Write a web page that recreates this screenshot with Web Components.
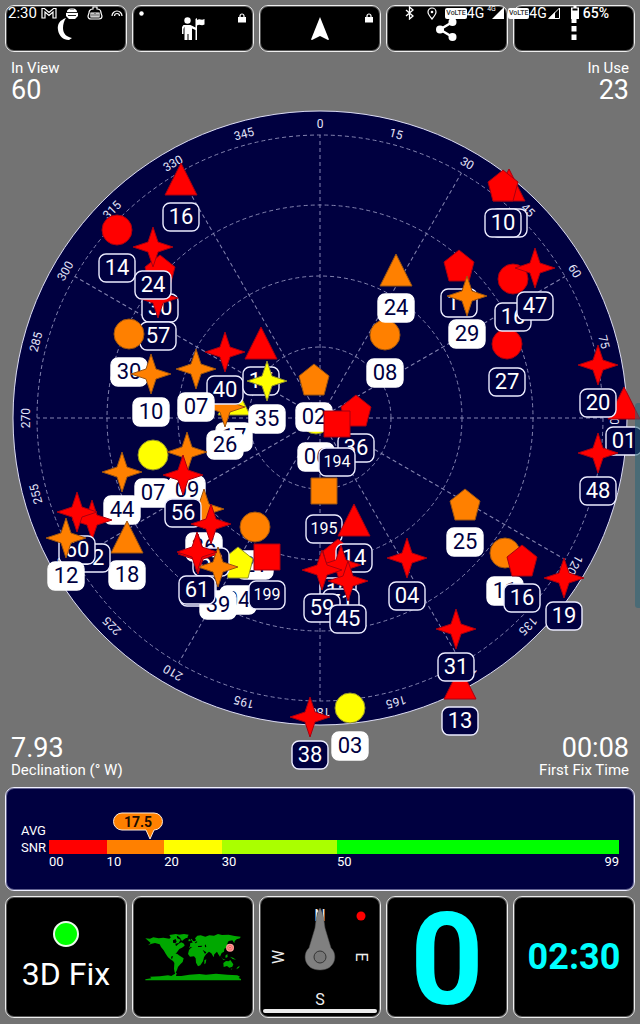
<!DOCTYPE html>
<html lang="en">
<head>
<meta charset="utf-8">
<meta name="viewport" content="width=device-width, initial-scale=1">
<title>GPS satellites</title>
<style>
html, body { margin: 0; background: #737373; }
body { font-family: Roboto, "Liberation Sans", sans-serif; color: #fff; overflow-x: hidden; }
</style>
</head>
<body>
<gps-app></gps-app>

<template id="t-app">
<style>
:host { display: block; position: relative; }
.row { display: grid; grid-template-columns: repeat(5, minmax(0, 1fr)); gap: 5px; padding: 5px 5px 0; }
.stats { display: flex; justify-content: space-between; padding: 7px 11px 5px; }
.stats.low { padding: 7px 11px 8px; }
.tiles { padding-bottom: 5px; }
svg { display: block; fill: #fff; }
status-bar, edge-handle { position: absolute; }
status-bar { top: 5px; left: 0; right: 0; }
edge-handle { top: 403px; right: 0; }
</style>
<div class="row">
  <tool-button label="Night mode"><svg width="24" height="24" viewBox="0 0 24 24"><path d="M12 1C6 3 3 7 4 13c1 6 5 10 11 10l3-2C13 20 9 17 9 11 9 7 10 4 12 1z"/></svg></tool-button>
  <tool-button label="Waypoints" locked><svg width="24" height="24" viewBox="0 0 24 24"><circle cx="6.500" cy="3.500" r="3.200"/><path d="M2.500 8h7l5 2.500V2l1.500-1v2c3-2 4 1 7.500-1v5.500c-3.500 2-4.500-1-7.500 1V23h-1.500V13l-3.500-1.500V23H7.500v-6h-1v6H3.500V9.500L2.500 12v5H1V10z"/></svg></tool-button>
  <tool-button label="Navigate" locked><svg width="24" height="24" viewBox="0 0 24 24"><path d="M12 0l9 22.500-1 .5-8-4-8 4-1-.5z"/></svg></tool-button>
  <tool-button label="Share"><svg width="24" height="24" viewBox="0 0 24 24"><path d="M17.500 5L5 12.500l12.500 7.500" fill="none" stroke="#fff" stroke-width="2.500"/><circle cx="17.500" cy="5" r="4"/><circle cx="5" cy="12.500" r="4"/><circle cx="17.500" cy="20" r="4"/></svg></tool-button>
  <tool-button label="More"><svg width="24" height="24" viewBox="0 0 24 24"><path d="M9.500 1h5v5h-5zM9.500 9h5v5.500h-5zM9.500 17.500h5V23h-5z"/></svg></tool-button>
</div>
<div class="stats">
  <stat-pair><span slot="name">In View</span><span slot="value">60</span></stat-pair>
  <stat-pair end><span slot="name">In Use</span><span slot="value">23</span></stat-pair>
</div>
<sky-plot></sky-plot>
<div class="stats low">
  <stat-pair flip><span slot="name">Declination (° W)</span><span slot="value">7.93</span></stat-pair>
  <stat-pair end flip><span slot="name">First Fix Time</span><span slot="value">00:08</span></stat-pair>
</div>
<snr-meter></snr-meter>
<div class="row tiles">
  <info-tile><fix-state>3D Fix</fix-state></info-tile>
  <info-tile><world-map></world-map></info-tile>
  <info-tile><compass-rose></compass-rose></info-tile>
  <info-tile><read-out size="large">0</read-out></info-tile>
  <info-tile><read-out>02:30</read-out></info-tile>
</div>
<status-bar></status-bar>
<edge-handle></edge-handle>
</template>

<template id="t-button">
<style>
:host { display: block; position: relative; }
button { display: flex; align-items: center; justify-content: center; width: 100%; height: 47px; margin: 0; padding: 0; background: #000; border: 1px solid #eee; border-radius: 9px; box-shadow: inset 0 0 0 1px #555; color: #fff; }
.lock { display: none; position: absolute; top: 8px; right: 7px; }
:host([locked]) .lock { display: block; }
</style>
<button type="button"><slot></slot></button>
<svg class="lock" width="10" height="10" viewBox="0 0 10 10"><path d="M1 4h8v5.500H1z" fill="#fff"/><path d="M3 4.500V3a2 2 0 0 1 4 0v1.500" fill="none" stroke="#fff" stroke-width="1.200"/></svg>
</template>

<template id="t-stat">
<style>
:host { display: flex; flex-direction: column; }
:host([end]) { align-items: flex-end; }
:host([flip]) { flex-direction: column-reverse; }
.name { font-size: 15px; line-height: 18px; }
.value { font-size: 27px; line-height: 26px; }
</style>
<div class="name"><slot name="name"></slot></div>
<div class="value"><slot name="value"></slot></div>
</template>

<template id="t-status">
<style>
:host { display: flex; justify-content: space-between; padding: 0 31px 0 8px; font-size: 14px; line-height: 16px; pointer-events: none; }
.group { display: flex; align-items: center; height: 16px; }
.left { gap: 8px; }
.left .clock { margin-right: -4px; font-size: 15px; }
.left .dot { margin-left: 8px; }
svg { display: block; fill: none; stroke: #fff; }
.volte { background: #fff; color: #333; border-radius: 2px; font-size: 7px; line-height: 11px; font-weight: 500; padding: 0 1px; }
.small { font-size: 7px; line-height: 8px; align-self: flex-start; margin-left: 3px; }
.bt { margin-right: 13px; }
.pin { margin-right: 8px; }
.sig { margin-left: -4px; }
.second { margin-left: 4px; }
.sig2 { margin: 0 11px 0 1px; }
.bat { margin-right: 4px; }
.level { font-weight: 500; }
</style>
<div class="group left">
  <span class="clock">2:30</span>
  <svg width="16" height="12" viewBox="0 0 16 12"><path d="M1 11V1.500h2.500L8 5.500l4.500-4H15V11h-3V5L8 8.500 4 5v6z" stroke-width="1.200"/></svg>
  <svg width="14" height="13" viewBox="0 0 14 13"><path d="M2 5C2 0 12 0 12 5l1 1v3l-3 3H4L1 9V6z" fill="#fff" stroke="none"/><path d="M1 5.500h12M3 8.500h8" stroke="#222"/><path d="M5 2l4 0" stroke="#555"/></svg>
  <svg width="16" height="14" viewBox="0 0 16 14"><path d="M6 3V1h4v2c3 0 4 2 4 4l1 3c0 2-1 3-3 3H4c-2 0-3-1-3-3l1-3c0-2 1-4 4-4zM4 7h8v4H4zM6 7v4M8 8v3M10 7v4" stroke-width="1.200"/></svg>
  <svg width="12" height="10" viewBox="0 0 12 10"><path d="M1 8a5 5 0 0 1 10 0M3.500 8a2.500 2.500 0 0 1 5 0" stroke-width="1.200"/></svg>
  <svg class="dot" width="5" height="5" viewBox="0 0 5 5"><circle cx="2.500" cy="2.500" r="2.200" fill="#fff" stroke="none"/></svg>
</div>
<div class="group">
  <svg class="bt" width="9" height="14" viewBox="0 0 9 14"><path d="M1 4l7 6-3.500 3V1L8 4l-7 6" stroke-width="1.300"/></svg>
  <svg class="pin" width="10" height="13" viewBox="0 0 10 13"><path d="M5 12C2 8.500 1 7 1 5a4 4 0 0 1 8 0c0 2-1 3.500-4 7z" stroke-width="1.200"/><circle cx="5" cy="5" r="1.300" fill="#fff" stroke="none"/></svg>
  <span class="volte">VoLTE</span><span>4G</span><span class="small">4G</span>
  <svg class="sig" width="12" height="12" viewBox="0 0 12 12"><path d="M12 0v12H0z" fill="#fff" stroke="none"/></svg>
  <span class="volte second">VoLTE</span><span>4G</span>
  <svg class="sig2" width="12" height="12" viewBox="0 0 12 12"><path d="M11.500 1v10.500H1z"/><path d="M7 5v7H0z" fill="#fff" stroke="none"/></svg>
  <svg class="bat" width="8" height="14" viewBox="0 0 8 14"><path d="M2.500 0h3v1.500H8V13H0V1.500h2.500z" fill="#fff" stroke="none"/><path d="M1.500 3.500h5" stroke="#000" stroke-width="2"/></svg>
  <span class="level">65%</span>
</div>
</template>

<template id="t-sky">
<style>
:host { display: block; position: relative; }
svg { display: block; width: 100%; height: auto; overflow: visible; font-family: inherit; }
.dial { fill: #000040; stroke: #dcdcf4; stroke-width: 1; }
.grid { fill: none; stroke: #8484b0; stroke-width: 1; stroke-dasharray: 4 3; }
.deg { fill: #e4e4f8; font-size: 12px; text-anchor: middle; }
.num { font-size: 22px; text-anchor: middle; }
.num.long { font-size: 16px; }
.tag { fill: #000040; stroke: #ececff; stroke-width: 1.400; }
.used .tag { fill: #fff; stroke: #fff; }
.num { fill: #fff; }
.used .num { fill: #000040; }
.mark { stroke-width: 1; }
</style>
<svg viewBox="0 108 640 620" role="img" aria-label="Satellite sky plot">
  <circle class="dial" cx="320" cy="418" r="307"/>
  <g class="grid"></g><g class="degs"></g><g class="sats"></g>
</svg>
</template>

<template id="t-snr">
<style>
:host { display: grid; grid-template-columns: 28px 1fr; margin: 0 5px; padding: 34px 15px 20px; background: #000040; border: 1px solid #f0f0ff; border-radius: 9px; box-shadow: inset 0 0 0 1px #606090; font-size: 13px; }
.side { line-height: 17px; }
.scale { position: relative; margin-top: 18px; display: flex; line-height: 16px; }
.seg { flex-basis: 0; min-width: 0; }
.bar { height: 14px; background: var(--c); }
.ticks { display: flex; justify-content: space-between; }
.bubble { position: absolute; left: 17.5%; bottom: 100%; margin-left: -36px; overflow: visible; }
.bubble text { font-size: 14px; font-weight: 700; text-anchor: middle; fill: #1c0c00; }
</style>
<div class="side"><div>AVG</div><div>SNR</div></div>
<div class="scale"></div>
</template>

<template id="t-tile">
<style>
:host { display: flex; align-items: center; justify-content: center; box-sizing: border-box; aspect-ratio: 1; background: #000; border: 1px solid #eee; border-radius: 9px; box-shadow: inset 0 0 0 1px #555; }
</style>
<slot></slot>
</template>

<template id="t-fix">
<style>
:host { display: flex; flex-direction: column; align-items: center; gap: 8px; font-size: 32px; line-height: 38px; }
i { box-sizing: border-box; width: 26px; height: 26px; border-radius: 50%; background: #0f0; border: 2px solid #eafbea; }
</style>
<i></i><span><slot></slot></span>
</template>

<template id="t-map">
<style>
:host { display: block; width: 80%; }
svg { display: block; width: 100%; height: auto; }
</style>
<svg viewBox="435 608 288 150" role="img" aria-label="World map">
<g fill="#00a800">
<path d="M436 627l14 1 10-4 16 3 14-2 18 3 8-7 14-2 2 8 10 4-6 10-10 2 2 8 8-8 8-4 8 4 2 6-8 6-8 4-6 8-6 8 1 8-6-4-8 3 2 8 6-3 2 6 8 4-3 2-14-7-10-8-7-11-6-10-8-10-4-8-14-4-10 2-11 5 8-7z"/>
<path d="M508 617l20-3 12 4-10 3-8 5-10-2zM530 617l22-3 14 2-4 8-10 6-6 5-5-8z"/>
<path d="M521 674l10-1 8 6 12 8-3 11-7 7-7 8-3 9-4 8 4 5-6-2-3-14 1-18-7-11z"/>
<path d="M573 655l8-3 12 2 14 4 5 11 8 3-8 12-3 12-8 12-7 3-6-11-1-13-5-6-12 1-6-8 3-12z"/>
<path d="M570 650l1-9 7-1-3-7-5 1 5-6 4 7 6 1 3-4-3-5 7-8 10-1 14 4 12-4 14 1 12-5 12 3 20-1 18 4 18 2-2 5-10 3-6 5-1 7-6-9-11 2-4 7 1 7-5 7-5 2-1 9-7 4-5 11-5-7-4-8-8 8-2 9-7-12-7-5-8 7-8 4-8-13-3-8-12 0-5-3-5 2-5-4-7 5z"/>
<path d="M670 701l8-6 8 1 5-4 9 13-3 7-9 3-7-5-10 3zM690 682l9 3 9 6-10-2zM662 680l7 9 8 3-7 0zM676 679l6-5 1 9-6 3zM698 646l4 5-6 7 1-5zM613 693l6-3-2 12-4 3zM565 631l5-2 1 6-5 1zM556 622l7 0-1 4-5 0zM712 714l7-5-2 6-8 5zM693 718l4 0-2 3z"/>
<path d="M436 753v-3l18-3-4-5 30-1 24-3 10 2 6-4 10-5-2 9 16 0 24-4 30-2 20 2 30-3 34 3 30 2 8 4-4 4 7 3v4z"/>
</g>
<g fill="#000"><path d="M519 633l8-4 3 8-4 5-7-2zM594 650l13-1-3 4-10 0zM614 649l3-4 2 8-3 1zM584 640l6-4 2 2-5 4zM608 661l4 8 3 5 4-5-7-5z"/></g>
<circle cx="690" cy="655" r="12" fill="#ff9a96"/><circle cx="690" cy="655" r="7" fill="none" stroke="#f05050" stroke-width="2"/><circle cx="690" cy="655" r="2" fill="#d22"/>
</svg>
</template>

<template id="t-compass">
<style>
:host { display: block; width: 100%; }
svg { display: block; width: 100%; height: auto; }
text { fill: #eee; font-size: 16px; text-anchor: middle; }
</style>
<svg viewBox="0 0 120 120" role="img" aria-label="Compass">
<text x="60" y="24">N</text><text x="60" y="108">S</text>
<text transform="translate(14 60) rotate(-90)" x="0" y="10">W</text>
<text transform="translate(106 60) rotate(90)" x="0" y="10">E</text>
<circle cx="101" cy="19" r="4.500" fill="#f00"/>
<path d="M60 11c3 4 4 12 5 20l6 20c7 6 5 22-11 22-16 0-18-16-11-22l6-20c1-8 2-16 5-20z" fill="#808080" stroke="#505050" stroke-width=".5"/>
<circle cx="60" cy="60" r="6" fill="#777" stroke="#333"/>
<rect x="3" y="112" width="114" height="4" rx="2" fill="#eaeaea"/>
</svg>
</template>

<template id="t-read">
<style>
:host { display: block; color: #0ff; font-weight: 700; font-size: 36px; line-height: 40px; }
:host([size=large]) { font-size: 128px; line-height: 112px; padding-top: 6px; }
</style>
<slot></slot>
</template>

<template id="t-edge">
<style>
:host { display: block; width: 5px; height: 205px; background: rgba(40, 100, 120, .55); border-radius: 3px 0 0 3px; }
</style>
</template>

<script>
const part = (name, id, ready) => customElements.define(name, class extends HTMLElement {
  constructor() {
    super();
    this.attachShadow({ mode: 'open' }).append(document.getElementById(id).content.cloneNode(true));
  }
  connectedCallback() { if (ready) ready(this, this.shadowRoot); }
});

const colors = { r: ['#ff0000', '#a80010'], o: ['#ff8000', '#9c5410'], y: ['#ffff00', '#90902c'] };
const shapes = {
  circle: '<circle r="15"/>',
  tri: '<path d="M0-16L16 16H-16z"/>',
  star: '<path d="M0-20L5-5 20 0 5 5 0 20-5 5-20 0-5-5z"/>',
  penta: '<path d="M0-15L15-3 10 16H-10L-15-3z"/>',
  square: '<path d="M-13-13H13V13H-13z"/>'
};
/* id, shape, signal colour, x, y, used in fix; later entries lie on top */
const sats = [
  ['16', 'tri', 'r', 181, 179], ['14', 'circle', 'r', 117, 230],
  ['30', 'penta', 'r', 160, 270], ['57', 'star', 'r', 158, 298], ['24', 'star', 'r', 153, 247],
  ['30', 'circle', 'o', 129, 334, 1], ['10', 'star', 'o', 151, 374, 1],
  ['17', 'tri', 'y', 234, 399, 1], ['26', 'star', 'o', 225, 407, 1],
  ['40', 'star', 'r', 225, 352], ['07', 'star', 'o', 196, 369, 1],
  ['15', 'tri', 'r', 261, 343], ['35', 'star', 'y', 267, 381, 1],
  ['08', 'circle', 'o', 385, 335, 1], ['24', 'tri', 'o', 396, 270, 1],
  ['06', 'circle', 'y', 316, 419, 1], ['02', 'penta', 'o', 314, 379, 1],
  ['36', 'penta', 'r', 356, 410], ['194', 'square', 'r', 337, 424],
  ['195', 'square', 'o', 324, 491],
  ['12', 'penta', 'r', 338, 554], ['14', 'tri', 'r', 354, 520], ['51', 'star', 'r', 341, 565],
  ['59', 'star', 'r', 322, 570], ['45', 'star', 'r', 348, 581],
  ['04', 'star', 'r', 407, 558], ['25', 'penta', 'o', 465, 504, 1],
  ['11', 'circle', 'o', 505, 553, 1], ['16', 'penta', 'r', 522, 560], ['19', 'star', 'r', 564, 578],
  ['13', 'tri', 'r', 460, 683], ['31', 'star', 'r', 456, 629],
  ['38', 'star', 'r', 310, 717], ['03', 'circle', 'y', 350, 708, 1],
  ['01', 'tri', 'r', 624, 403], ['48', 'star', 'r', 598, 453], ['20', 'star', 'r', 598, 365],
  ['12', 'tri', 'r', 509, 185], ['10', 'penta', 'r', 503, 185],
  ['11', 'penta', 'r', 459, 265], ['29', 'star', 'o', 467, 296, 1],
  ['27', 'circle', 'r', 507, 344], ['16', 'circle', 'r', 513, 279], ['47', 'star', 'r', 535, 268],
  ['44', 'star', 'o', 122, 472, 1], ['07', 'circle', 'y', 153, 455, 1],
  ['18', 'tri', 'o', 127, 537, 1],
  ['32', 'star', 'r', 92, 520], ['60', 'star', 'r', 77, 512], ['12', 'star', 'o', 66, 538, 1],
  ['09', 'star', 'o', 187, 452, 1], ['36', 'star', 'o', 204, 509, 1], ['56', 'star', 'r', 183, 475],
  ['21', 'circle', 'o', 255, 527, 1], ['04', 'penta', 'y', 238, 562, 1], ['53', 'star', 'r', 211, 524],
  ['62', 'star', 'r', 198, 554], ['39', 'star', 'o', 218, 567, 1], ['61', 'star', 'r', 197, 552],
  ['199', 'square', 'r', 267, 557]
];

part('tool-button', 't-button', (el, root) => root.querySelector('button').setAttribute('aria-label', el.getAttribute('label')));
part('stat-pair', 't-stat');
part('status-bar', 't-status');
part('sky-plot', 't-sky', (el, root) => {
  let grid = '', degs = '';
  for (const r of [71, 142, 213, 283]) grid += `<circle cx="320" cy="418" r="${r}"/>`;
  for (let a = 0; a < 360; a += 30) grid += `<path d="M320 418V135" transform="rotate(${a} 320 418)"/>`;
  for (let a = 0; a < 360; a += 15) degs += `<text class="deg" x="320" y="128" transform="rotate(${a} 320 418)">${a}</text>`;
  root.querySelector('.grid').innerHTML = grid;
  root.querySelector('.degs').innerHTML = degs;
  root.querySelector('.sats').innerHTML = sats.map(([id, shape, c, x, y, used]) =>
    `<g transform="translate(${x} ${y})" class="${used ? 'used' : ''}">
      <g class="mark" fill="${colors[c][0]}" stroke="${colors[c][1]}">${shapes[shape]}</g>
      <rect class="tag" x="-18" y="24" width="36" height="28" rx="7"/>
      <text class="num ${id.length > 2 ? 'long' : ''}" x="0" y="${id.length > 2 ? 43 : 45}">${id}</text></g>`).join('');
});
part('snr-meter', 't-snr', (el, root) => {
  const segs = [[10, '#ff0000', '00'], [10, '#ff8000', '10'], [10, '#ffff00', '20'], [20, '#aaff00', '30'], [49, '#00ff00', '50', '99']];
  root.querySelector('.scale').innerHTML = segs.map(([w, c, ...t]) =>
    `<div class="seg" style="flex-grow:${w};--c:${c}"><div class="bar"></div><div class="ticks">${t.map(v => `<span>${v}</span>`).join('')}</div></div>`).join('') +
    `<svg class="bubble" width="50" height="28" viewBox="0 0 50 28"><path d="M9 1H41a8.500 8.500 0 0 1 0 17L37 27 33 18H9A8.500 8.500 0 0 1 9 1z" fill="#ff8000" stroke="#ffe8d4"/><text x="25" y="15">17.5</text></svg>`;
});
part('info-tile', 't-tile');
part('fix-state', 't-fix');
part('world-map', 't-map');
part('compass-rose', 't-compass');
part('read-out', 't-read');
part('edge-handle', 't-edge');
part('gps-app', 't-app');
</script>
</body>
</html>
